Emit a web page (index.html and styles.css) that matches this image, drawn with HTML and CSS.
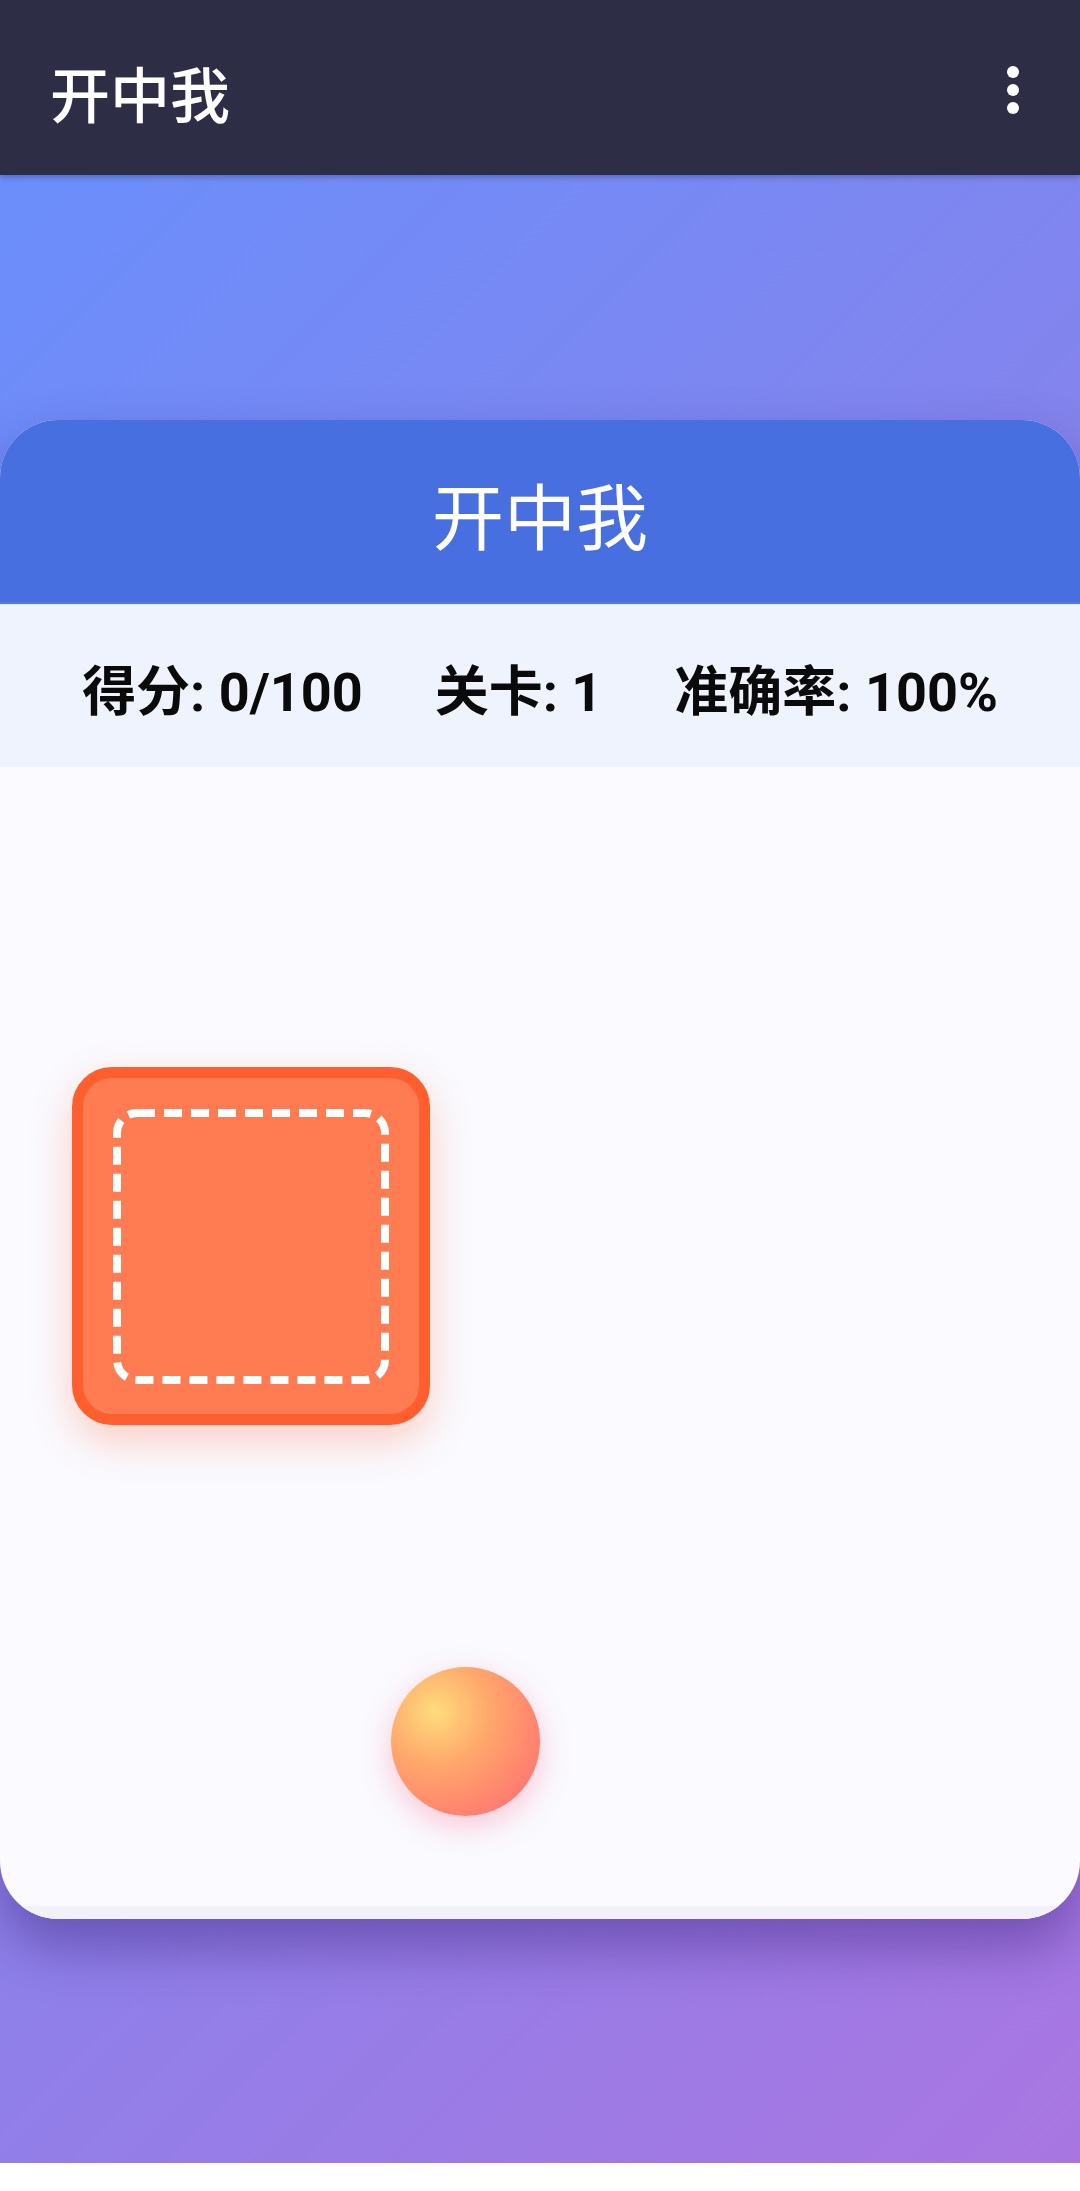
FILE: index.html
```html
<!doctype html>
<html>
<head>
<meta charset="utf-8">
<title>开中我</title>
<link rel="stylesheet" href="styles.css">
</head>
<body>

<div class="appbar">
    <span class="appbar-title">开中我</span>
    <svg class="menu" width="14" height="52" viewBox="0 0 14 52">
        <circle cx="7" cy="8" r="6" fill="#fff"/>
        <circle cx="7" cy="26" r="6" fill="#fff"/>
        <circle cx="7" cy="44" r="6" fill="#fff"/>
    </svg>
</div>

<div class="stage">
    <div class="card">
        <div class="card-head">开中我</div>
        <div class="stats">
            <span>得分: 0/100</span>
            <span>关卡: 1</span>
            <span>准确率: 100%</span>
        </div>
        <div class="field">
            <div class="target">
                <svg class="target-slot" width="336" height="336" viewBox="0 0 336 336">
                    <rect x="34" y="35" width="268" height="267" rx="20" ry="20"
                          fill="none" stroke="#fff" stroke-width="8" stroke-dasharray="18 9"/>
                </svg>
            </div>
            <div class="ball"></div>
        </div>
    </div>
</div>

</body>
</html>
```

FILE: styles.css
```css
html,body{
    margin: 0;
    background-color: #ffffff;
}
body{
    width: 1080px;
    height: 2191px;
    font-family: Roboto, "Noto Sans CJK SC", sans-serif;
}
.appbar{
    height: 175px;
    box-sizing: border-box;
    padding: 0 60px 0 50px;
    background-color: #2d2e45;
    display: flex;
    align-items: center;
    justify-content: space-between;
    position: relative;
    z-index: 2;
    box-shadow: 0 2px 6px rgba(0,0,0,.25);
}
.appbar-title{
    color: #fff;
    font-family: "Noto Sans CJK SC", sans-serif;
    font-size: 60px;
    font-weight: 500;
    line-height: 1;
    margin-top: 8px;
}
.menu{
    margin-top: 4px;
}

.stage{
    height: 1988px;
    background: linear-gradient(135deg, #6a8efb 0%, #8583ec 45%, #a976e1 100%);
    display: flex;
    align-items: center;
}
.card{
    width: 100%;
    height: 1499px;
    border-radius: 58px;
    overflow: hidden;
    background-color: #fafaff;
    display: flex;
    flex-direction: column;
    box-shadow: 0 28px 55px rgba(50,25,110,.42);
}
.card-head{
    height: 184px;
    flex: none;
    background-color: #486fe0;
    border-bottom: 2px solid #5b78d6;
    box-sizing: border-box;
    color: #fff;
    font-family: "Noto Sans CJK SC", sans-serif;
    font-size: 72px;
    display: flex;
    align-items: center;
    justify-content: center;
    padding-top: 4px;
}
.stats{
    height: 163px;
    flex: none;
    background-color: #eff3fe;
    border-top: 1px solid #dcecff;
    box-sizing: border-box;
    display: flex;
    align-items: center;
    justify-content: center;
    gap: 72px;
    font-size: 54px;
    font-weight: 700;
    color: #0a0a0a;
    padding-top: 4px;
}
.field{
    flex: 1;
    position: relative;
    border-bottom: 13px solid #f2f1f9;
}
.target{
    position: absolute;
    left: 72px;
    top: 300px;
    width: 358px;
    height: 358px;
    box-sizing: border-box;
    border: 11px solid #ff5f2e;
    border-radius: 40px;
    background-color: #ff7b52;
    box-shadow: 0 16px 40px rgba(255,95,46,.28);
}
.target-slot{
    display: block;
}
.ball{
    position: absolute;
    left: 391px;
    top: 900px;
    width: 149px;
    height: 149px;
    border-radius: 50%;
    background: radial-gradient(circle at 30% 30%, #ffdc7c 0%, #ffa86c 36%, #ff886e 66%, #ff6778 100%);
    box-shadow: 0 10px 30px rgba(255,100,130,.35);
}
```
